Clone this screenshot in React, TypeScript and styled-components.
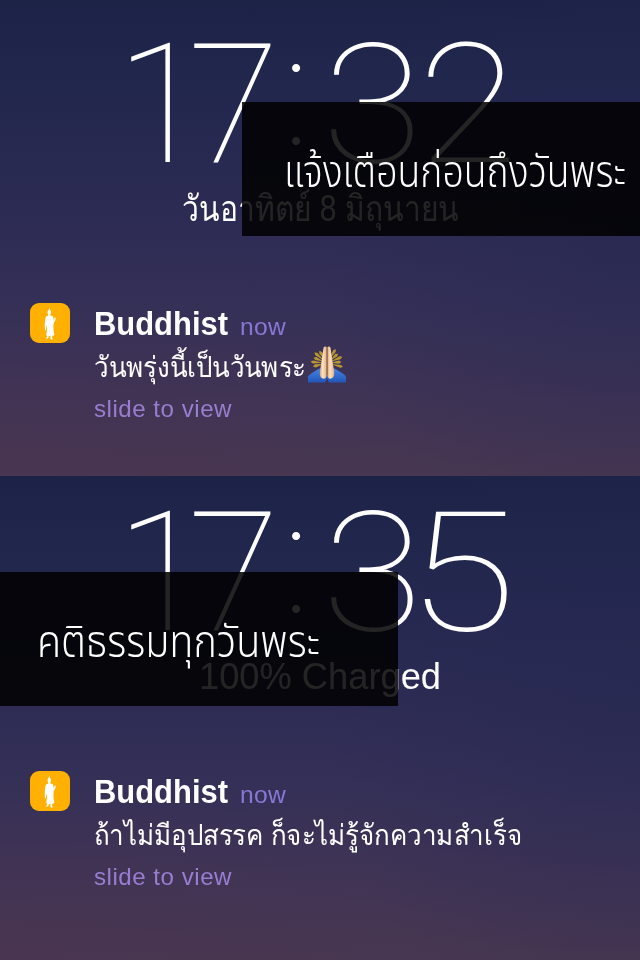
import React, { useLayoutEffect, useRef, useState } from "react";
import styled, { createGlobalStyle } from "styled-components";

const GlobalStyle = createGlobalStyle`
  body {
    margin: 0;
    background: #26284f;
  }
`;

const Page = styled.main`
  width: 640px;
  height: 960px;
  overflow: hidden;
  color: #fff;
  font-family: "Liberation Sans", Arial, sans-serif;
  will-change: transform;
`;

const Screen = styled.section<{ $height: number; $top: number }>`
  position: relative;
  box-sizing: border-box;
  height: ${(p) => p.$height}px;
  padding-top: ${(p) => p.$top}px;
  overflow: hidden;
  background:
    radial-gradient(ellipse 380px 200px at 0% 100%, rgba(78, 48, 78, 0.22), rgba(78, 48, 78, 0)),
    radial-gradient(ellipse 320px 330px at 100% 50%, rgba(34, 38, 80, 0.42), rgba(34, 38, 80, 0)),
    linear-gradient(180deg, #1d2347 0, #22274e 90px, #2c2b54 210px, #353057 310px, #403455 400px, #483751 480px);
`;

const Clock = styled.div`
  display: flex;
  height: 150px;
  padding-left: 116px;
  font-family: Roboto, sans-serif;
  font-size: 167.4px;
  font-weight: 130;
  line-height: 150px;
`;

const Digit = styled.span<{ $cell: number; $stretch?: number }>`
  width: ${(p) => p.$cell}px;
  white-space: nowrap;
  transform: scaleX(${(p) => p.$stretch ?? 1});
  transform-origin: 0 0;
`;

const Colon = styled.span`
  width: 52px;
  font-family: Inter, sans-serif;
  font-size: 156px;
  font-weight: 120;
  text-align: center;
  line-height: 116px;
`;

const Subtitle = styled.div`
  display: flex;
  justify-content: center;
  height: 52px;
  margin-top: 3px;
  font-size: 36px;
  line-height: 52px;
`;

const Notice = styled.div`
  display: grid;
  grid-template-columns: 40px 1fr;
  column-gap: 24px;
  margin: 68px 30px 0;
`;

const Body = styled.div`
  display: flex;
  flex-direction: column;
  align-items: flex-start;
  padding-top: 1px;
`;

const Heading = styled.div`
  display: flex;
  align-items: baseline;
  gap: 12px;
  height: 40px;
  line-height: 40px;
`;

const AppName = styled.strong`
  font-size: 32.5px;
`;

const When = styled.span`
  font-size: 24px;
  letter-spacing: 0.3px;
  color: #8977d4;
`;

const Message = styled.div`
  display: flex;
  gap: 2px;
  height: 46px;
  font-size: 28.5px;
  line-height: 47px;
`;

const Action = styled.div`
  height: 37px;
  font-size: 24px;
  letter-spacing: 0.5px;
  line-height: 38px;
  color: #9a7dd0;
`;

const Caption = styled.div<{ $left: number; $top: number; $inset: number }>`
  position: absolute;
  left: ${(p) => p.$left}px;
  top: ${(p) => p.$top}px;
  box-sizing: border-box;
  width: 398px;
  height: 134px;
  padding: 37px 0 0 ${(p) => p.$inset}px;
  background: rgba(0, 0, 0, 0.86);
  font-family: "Noto Sans Thai", "Noto Sans", sans-serif;
  font-size: 44px;
  font-weight: 300;
  line-height: 70px;
`;

const IconBox = styled.div`
  width: 40px;
  height: 40px;
  border-radius: 9px;
  background: #ffb000;

  svg {
    display: block;
  }
`;

const HandsSvg = styled.svg`
  display: block;
  margin-top: 2px;
`;

const Fitted = styled.span`
  display: block;
  white-space: nowrap;
  transform-origin: 0 0;
`;

const FitBox = styled.span<{ $width: number }>`
  display: block;
  width: ${(p) => p.$width}px;
`;

/** Stretches a line of text so that it spans exactly the given width. */
function Fit({ width, children }: { width: number; children: React.ReactNode }) {
  const ref = useRef<HTMLSpanElement>(null);
  const [scale, setScale] = useState(1);
  useLayoutEffect(() => {
    const range = document.createRange();
    range.selectNodeContents(ref.current!);
    setScale((s) => width / (range.getBoundingClientRect().width / s));
  }, [width]);
  return (
    <FitBox $width={width}>
      <Fitted ref={ref} style={{ transform: `scaleX(${scale})` }}>
        {children}
      </Fitted>
    </FitBox>
  );
}

function BuddhaIcon() {
  return (
    <IconBox>
      <svg width="40" height="40" viewBox="0 0 40 40" fill="#fff">
        <path d="M19 4l.6 2.4 1.1 1.3.3 2-.7 1.9.2.8 2.300.9.8 2.600.3 2 .5-1.400-.3-1.600.9-.7.8 1-.5 2.300-1.500 2.300-.4 3.400.2 4.600.8 4.200-1.400.8-5.600.4-1.200-1.200.8-5.200-.4-4.400-.5 1.600-.1 3.200-.6.5-.6-2.200-.1-4.600.7-5.400.6-1.900 2.200-1 .1-.8-.8-1.900.3-2 1-1.300z" />
        <path d="M17.2 32.6h1.4l.1 2.2-1.8 1-1.4-.5 1.5-1zM20.6 32.6h1.6l-.1 2 .8 1.6-1.4.5-1.2-1.3z" />
      </svg>
    </IconBox>
  );
}

function PrayingHands() {
  const rays = [-104, -86, -68, -50, -32, 32, 50, 68, 86, 104];
  return (
    <HandsSvg width="38" height="37" viewBox="0 0 38 37">
      <defs>
        <linearGradient id="skin" x1="0" x2="1">
          <stop offset="0" stopColor="#d99d71" />
          <stop offset="0.4" stopColor="#fbe3c3" />
          <stop offset="1" stopColor="#e2b184" />
        </linearGradient>
        <linearGradient id="sleeve" x1="0" y1="0" x2="0" y2="1">
          <stop offset="0" stopColor="#4586e4" />
          <stop offset="1" stopColor="#2355b8" />
        </linearGradient>
      </defs>
      {rays.map((angle, i) => (
        <path
          key={angle}
          d={i % 2 ? "M17.5 3L19 0.5L20.5 3L19 13Z" : "M17.4 5L19 2.5L20.6 5L19 13Z"}
          fill="#c6a22e"
          opacity="0.9"
          transform={`rotate(${angle} 19 17)`}
        />
      ))}
      <path d="M0 36.5v-6c1-2 5-4 8-6 3-2 5-2.500 6-2.500l5 9v1l-1.800 4.500zM38 36.500v-6c-1-2-5-4-8-6-3-2-5-2.500-6-2.500l-5 9v1l1.800 4.500z" fill="url(#sleeve)" />
      <path d="M15.600 1.400c.9-1.400 2.600-1.200 3.200 0v27c-.2 3.200-1.900 4.800-4 4.200-2.800-.8-3.400-4-2.800-8z" fill="url(#skin)" />
      <path d="M22.400 1.400c-.9-1.400-2.600-1.200-3.200 0v27c.2 3.200 1.900 4.800 4 4.200 2.800-.8 3.400-4 2.800-8z" fill="url(#skin)" />
      <path d="M19 1.500v27.500" stroke="#8a5236" strokeWidth="0.9" />
    </HandsSvg>
  );
}

function Notification({ children }: { children: React.ReactNode }) {
  return (
    <Notice>
      <BuddhaIcon />
      <Body>
        <Heading>
          <AppName>
            <Fit width={134}>Buddhist</Fit>
          </AppName>
          <When>
            <Fit width={46}>now</Fit>
          </When>
        </Heading>
        <Message>{children}</Message>
        <Action>
          <Fit width={138}>slide to view</Fit>
        </Action>
      </Body>
    </Notice>
  );
}

interface TimeProps {
  last: string;
  gap: number;
  stretch: number;
}

function Time({ last, gap, stretch }: TimeProps) {
  return (
    <Clock>
      <Digit $cell={72}>1</Digit>
      <Digit $cell={82}>7</Digit>
      <Colon>:</Colon>
      <Digit $cell={gap} $stretch={1.1}>
        3
      </Digit>
      <Digit $cell={98} $stretch={stretch}>
        {last}
      </Digit>
    </Clock>
  );
}

export default function App() {
  return (
    <Page>
      <GlobalStyle />
      <Screen $height={476} $top={30}>
        <Time last="2" gap={96} stretch={1.09} />
        <Subtitle>
          <Fit width={277}>วันอาทิตย์ 8 มิถุนายน</Fit>
        </Subtitle>
        <Notification>
          <Fit width={212}>วันพรุ่งนี้เป็นวันพระ</Fit>
          <PrayingHands />
        </Notification>
        <Caption $left={242} $top={102} $inset={42}>
          <Fit width={342}>แจ้งเตือนก่อนถึงวันพระ</Fit>
        </Caption>
      </Screen>
      <Screen $height={484} $top={22}>
        <Time last="5" gap={85} stretch={1.19} />
        <Subtitle>
          <Fit width={242}>100% Charged</Fit>
        </Subtitle>
        <Notification>
          <Fit width={428}>ถ้าไม่มีอุปสรรค ก็จะไม่รู้จักความสำเร็จ</Fit>
        </Notification>
        <Caption $left={0} $top={96} $inset={37}>
          <Fit width={283}>คติธรรมทุกวันพระ</Fit>
        </Caption>
      </Screen>
    </Page>
  );
}
